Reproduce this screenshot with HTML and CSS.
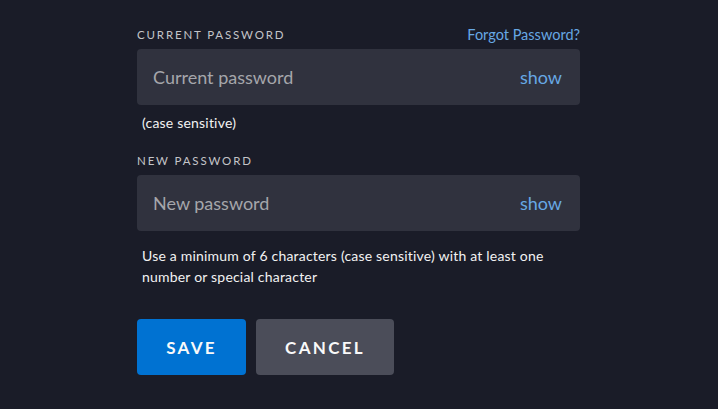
FILE: index.html
```html
<!DOCTYPE html>
<html lang="en">
<head>
<meta charset="utf-8">
<link rel="stylesheet" href="styles.css">
</head>
<body>
<form class="form">
  <div class="field">
    <div class="label-row">
      <span class="label">CURRENT PASSWORD</span>
      <a class="forgot" href="#">Forgot Password?</a>
    </div>
    <div class="input">
      <span class="placeholder">Current password</span>
      <span class="show">show</span>
    </div>
    <p class="hint">(case sensitive)</p>
  </div>
  <div class="field second">
    <div class="label-row">
      <span class="label">NEW PASSWORD</span>
    </div>
    <div class="input">
      <span class="placeholder">New password</span>
      <span class="show">show</span>
    </div>
    <p class="hint long">Use a minimum of 6 characters (case sensitive) with at least one number or special character</p>
  </div>
  <div class="actions">
    <button type="button" class="btn save">SAVE</button>
    <button type="button" class="btn cancel">CANCEL</button>
  </div>
</form>
</body>
</html>
```
FILE: styles.css
```css
* { box-sizing: border-box; }
html, body { margin: 0; padding: 0; }
body {
  background: #1a1c28;
  font-family: Lato, "Open Sans", sans-serif;
  color: #f9f9f9;
  width: 718px;
  height: 409px;
  overflow: hidden;
}
.form {
  width: 443px;
  margin-left: 137px;
  padding-top: 26px;
}
.label-row {
  display: flex;
  justify-content: space-between;
  align-items: center;
  height: 16px;
  margin-bottom: 7px;
}
.label {
  font-size: 11.5px;
  letter-spacing: 1.85px;
  color: #c4c5c9;
}
.forgot {
  font-size: 14.5px;
  color: #67a8e4;
  text-decoration: none;
}
.input {
  height: 56px;
  background: #30323e;
  border-radius: 4px;
  display: flex;
  align-items: center;
  justify-content: space-between;
  padding: 0 18px 0 16px;
}
.placeholder {
  font-size: 18px;
  color: #a5a6ab;
}
.show {
  font-size: 18px;
  color: #67a8e4;
}
.hint {
  margin: 7px 0 0 5px;
  font-size: 14px;
  letter-spacing: 0.2px;
  color: #f2f2f2;
  line-height: 21px;
}
.second { margin-top: 19px; }
.long { margin-top: 14px; width: 425px; }
.actions {
  display: flex;
  gap: 10px;
  margin-top: 32px;
}
.btn {
  height: 56px;
  border: none;
  border-radius: 4px;
  font-family: Lato, sans-serif;
  font-weight: 700;
  font-size: 17px;
  letter-spacing: 2.3px;
  color: #f9f9f9;
}
.save { width: 109px; background: #0072d2; }
.cancel { width: 138px; background: #4b4d59; }
```
